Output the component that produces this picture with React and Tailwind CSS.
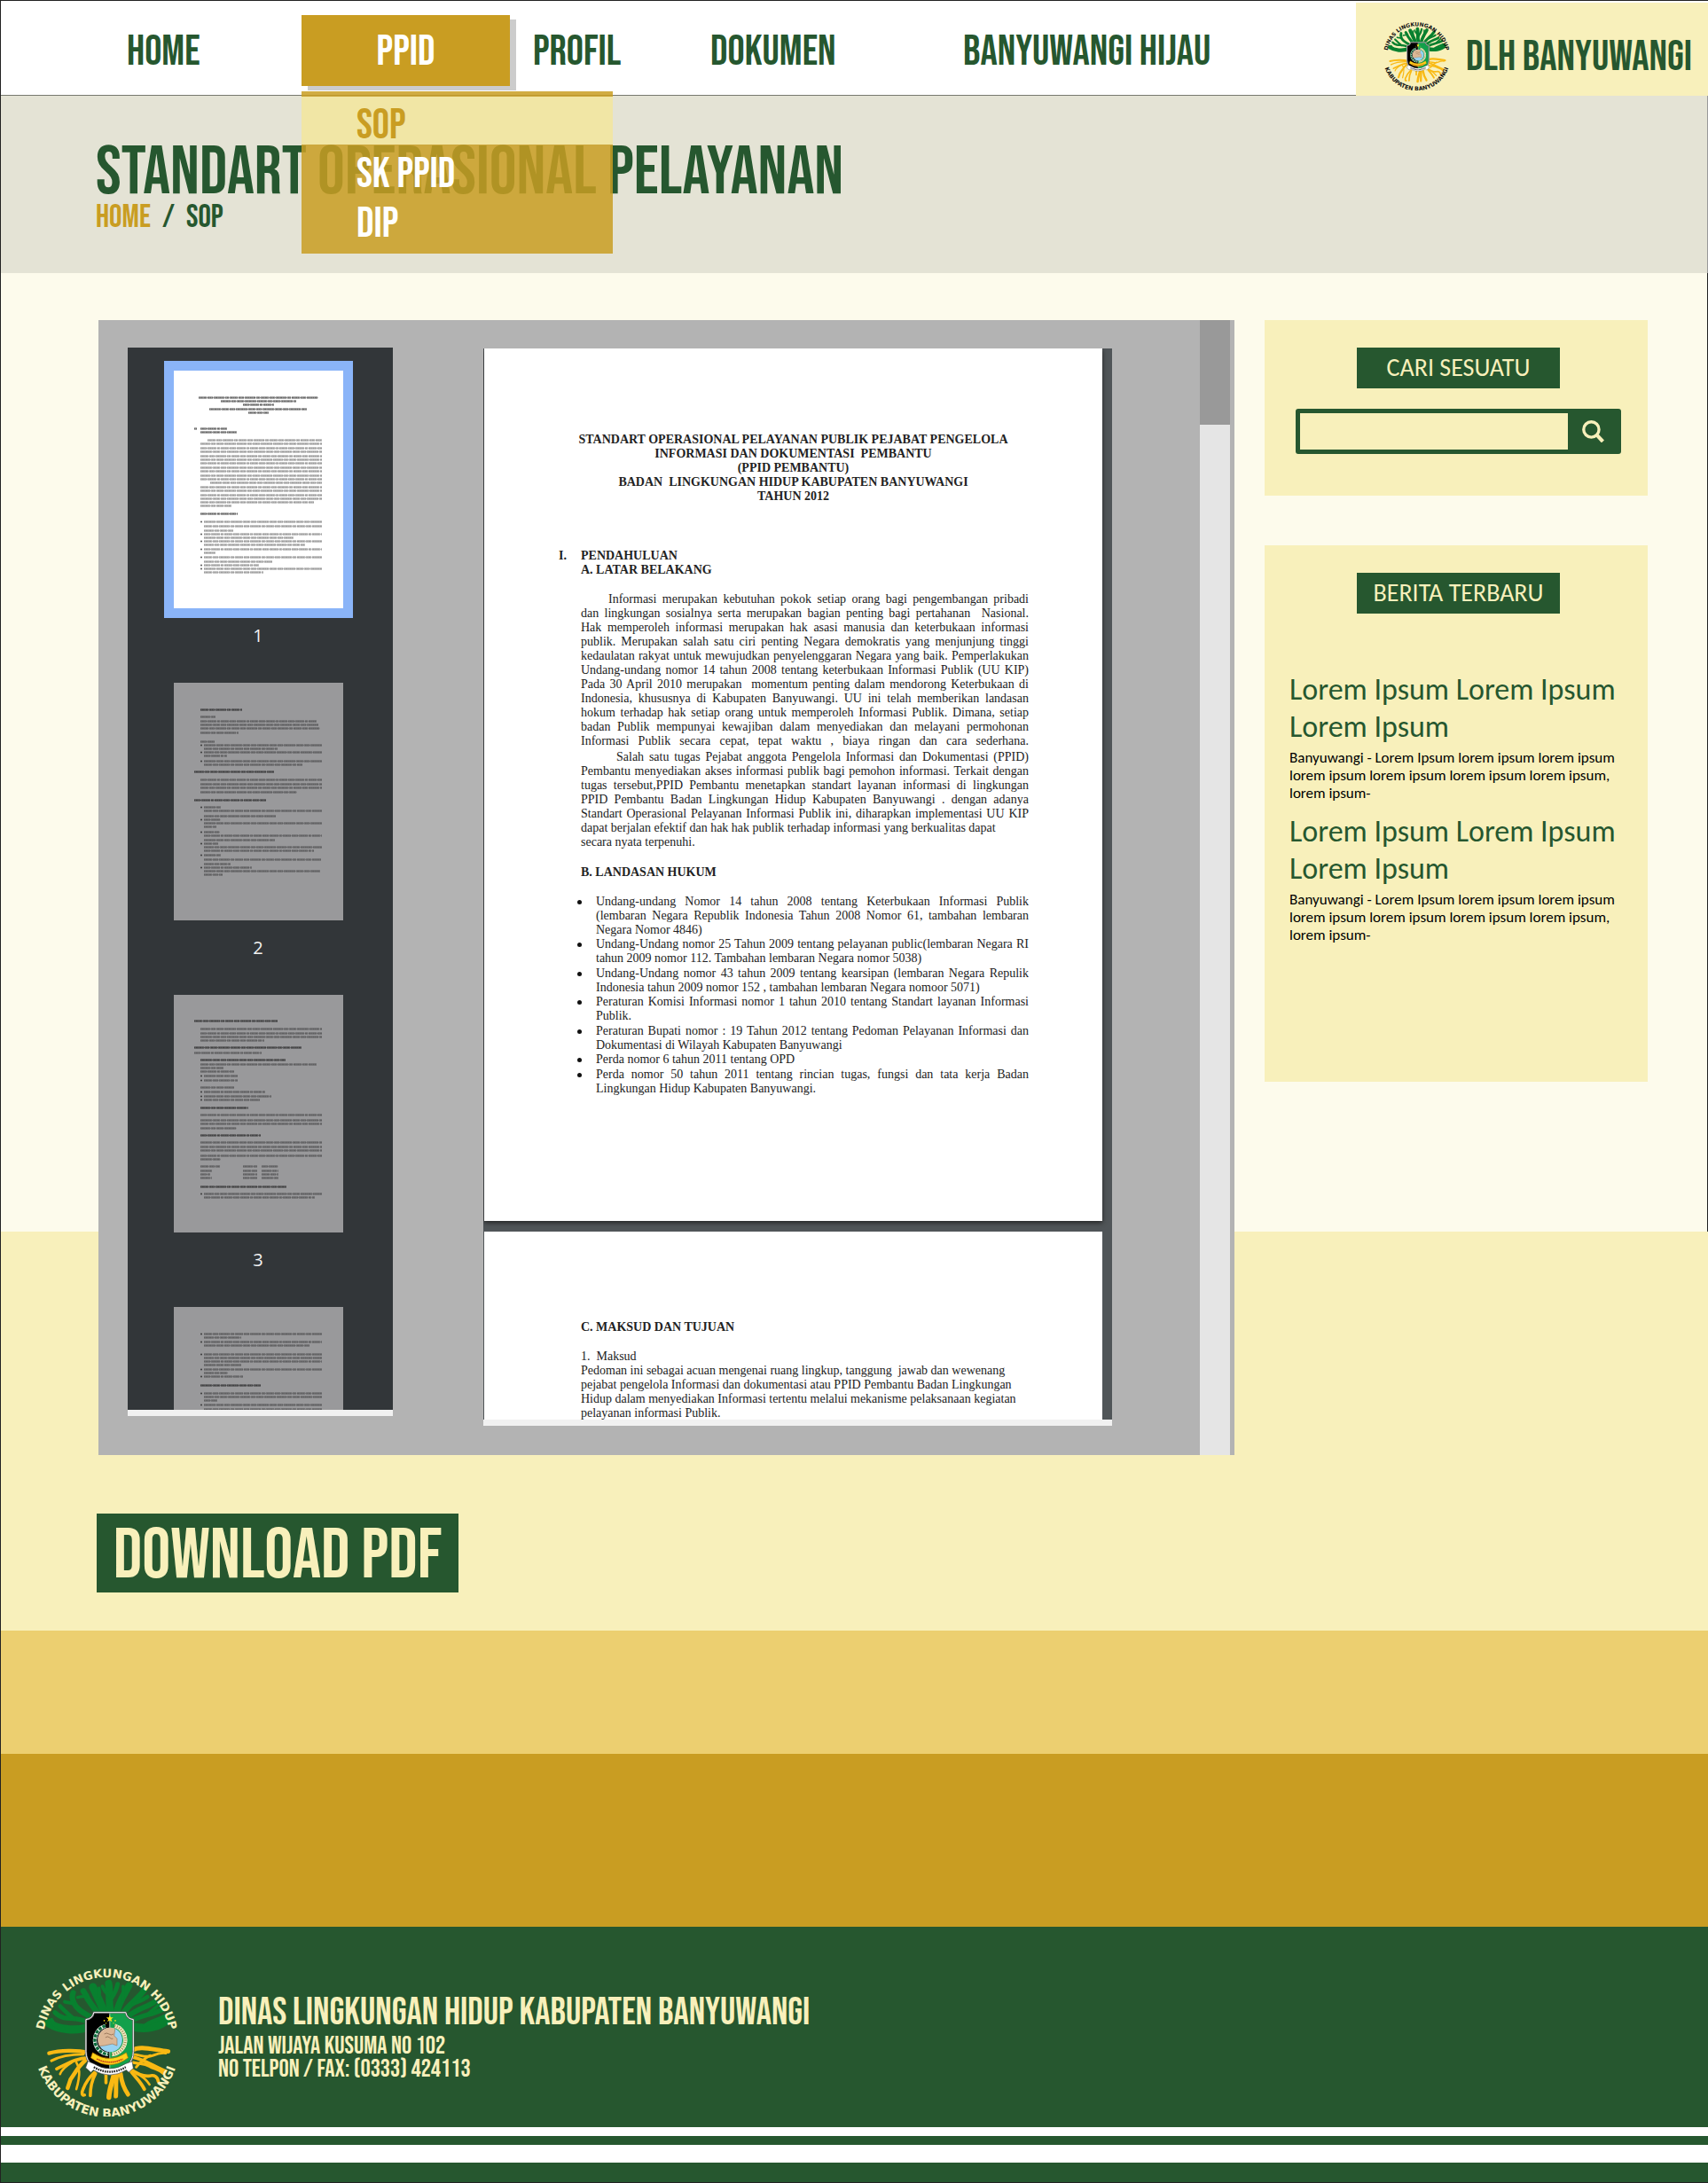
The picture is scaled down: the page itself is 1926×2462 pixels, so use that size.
import React from 'react';

const CANOPY = [
  ['M215 226 C165 244 105 238 70 214', 28],
  ['M120 232 C98 230 86 216 80 204', 14],
  ['M210 212 C180 196 150 200 122 196 C106 192 98 184 92 178', 16],
  ['M158 200 C140 186 126 172 110 156', 14],
  ['M225 200 C190 178 168 168 158 146 C151 132 151 120 155 110', 19],
  ['M160 150 C148 143 136 145 126 141', 12],
  ['M245 190 C230 160 206 142 200 120 L190 104', 20],
  ['M200 124 C188 120 178 124 170 126', 10],
  ['M262 180 C250 140 234 118 223 90', 27],
  ['M240 130 C250 116 246 106 244 94', 10],
  ['M284 180 C276 140 282 106 277 78', 25],
  ['M282 124 C266 108 258 98 256 88', 12],
  ['M286 130 C300 108 306 94 308 80', 15],
  ['M304 180 C312 140 334 112 347 86', 24],
  ['M324 136 C330 112 328 98 327 88', 11],
  ['M326 184 C344 150 380 132 401 99', 20],
  ['M362 148 C384 138 398 134 411 124', 14],
  ['M340 196 C366 168 408 160 433 143', 18],
  ['M356 206 C390 186 430 186 462 167', 17],
  ['M410 186 C426 172 440 160 450 151', 11],
  ['M356 226 C400 238 452 230 478 202', 29],
  ['M400 226 C420 206 446 206 467 192', 14],
];

const ROOTS = [
  ['M205 316 C170 306 108 308 72 318', 13],
  ['M190 322 C150 322 110 328 80 344', 9],
  ['M205 334 C170 334 140 352 98 372', 11],
  ['M150 350 C130 362 116 372 110 390', 8],
  ['M196 344 C170 366 160 390 146 408 L136 438', 14],
  ['M166 350 C176 366 182 386 166 442', 8],
  ['M228 385 C206 406 196 424 190 440 C182 456 186 466 194 462', 11],
  ['M232 388 C220 410 214 430 214 464', 11],
  ['M268 388 L268 420', 11],
  ['M296 385 C294 410 280 434 278 470', 17],
  ['M306 390 C300 420 304 440 302 466', 15],
  ['M318 388 C322 420 330 440 344 460', 15],
  ['M350 372 C380 392 400 400 418 396 C436 392 446 400 448 416', 11],
  ['M350 374 C366 400 384 410 400 442', 12],
  ['M372 388 C396 398 410 414 418 426', 8],
  ['M358 308 C384 292 420 304 482 312', 15],
  ['M362 322 C390 324 404 336 430 326 C448 318 460 316 474 318', 9],
  ['M362 332 C396 340 420 356 472 380', 12],
  ['M362 350 C390 356 400 352 416 362 C436 374 450 372 466 388', 10],
  ['M420 326 C400 336 388 346 372 366', 9],
];

function Logo({ className, ink, id }) {
  return (
    <svg viewBox="10 14 522 522" className={className} role="img" aria-label="Dinas Lingkungan Hidup Kabupaten Banyuwangi">
      <defs>
        <path id={`${id}-top`} d="M53 254 A218 218 0 0 1 487 254" />
        <path id={`${id}-bottom`} d="M21 288 A250 250 0 0 0 521 288" />
        <clipPath id={`${id}-shield`}>
          <path d="M199 202 Q222 200 226 178 H336 Q340 200 362 202 V312 Q362 372 281 380 Q199 372 199 312 Z" />
        </clipPath>
        <clipPath id={`${id}-disc`}>
          <circle cx="282" cy="272" r="42" />
        </clipPath>
      </defs>
      <g fill="none" stroke="#08802f" strokeLinecap="round">
        {CANOPY.map(([d, w]) => (
          <path key={d} d={d} strokeWidth={w} />
        ))}
      </g>
      <path d="M200 196 Q282 150 362 196 V238 H200 Z" fill="#08802f" />
      <g fill="none" stroke="#f9b913" strokeLinecap="round">
        {ROOTS.map(([d, w]) => (
          <path key={d} d={d} strokeWidth={w} />
        ))}
      </g>
      <g clipPath={`url(#${id}-shield)`}>
        <rect x="195" y="170" width="86" height="215" fill="#000" />
        <rect x="281" y="170" width="86" height="215" fill="#12a04b" />
        <path d="M281 170 V385" stroke="#fff" strokeWidth="2" />
      </g>
      <path d="M199 202 Q222 200 226 178 H336 Q340 200 362 202 V312 Q362 372 281 380 Q199 372 199 312 Z" fill="none" stroke="#555" strokeWidth="7" />
      <path d="M199 202 Q222 200 226 178 H336 Q340 200 362 202 V312 Q362 372 281 380 Q199 372 199 312 Z" fill="none" stroke="#fff" strokeWidth="3" />
      <path d="M281 187 l3 8 h9 l-7 6 3 9 -8 -5 -8 5 3 -9 -7 -6 h9 z" fill="#ffe81a" />
      <g fill="#ffe81a">
        <circle cx="262" cy="206" r="2.500" />
        <circle cx="300" cy="206" r="2.500" />
        <circle cx="268" cy="215" r="2" />
        <circle cx="294" cy="215" r="2" />
      </g>
      <path d="M266 224 A50 50 0 0 0 276 322" fill="none" stroke="#e8f0e8" strokeWidth="13" />
      <path d="M266 224 A50 50 0 0 0 276 322" fill="none" stroke="#0a6a3a" strokeWidth="10" strokeDasharray="11 4" />
      <path d="M298 224 A50 50 0 0 1 288 322" fill="none" stroke="#efe9c4" strokeWidth="14" />
      <path d="M298 224 A50 50 0 0 1 288 322" fill="none" stroke="#a09055" strokeWidth="9" strokeDasharray="3 5" />
      <g clipPath={`url(#${id}-disc)`}>
        <rect x="238" y="228" width="90" height="90" fill="#97d3f3" />
        <path d="M236 250 L262 228 L300 228 L296 258 L306 268 L306 292 L290 286 L262 292 L240 294 Z" fill="#dcb795" stroke="#9a7658" strokeWidth="2" />
        <path d="M262 252 q8 -6 16 0 t16 0 M266 264 q8 -6 14 0 t12 4" fill="none" stroke="#7d5b40" strokeWidth="2" />
      </g>
      <path d="M222 316 Q280 356 338 316 L344 334 Q280 382 216 334 Z" fill="#ffd21a" stroke="#c47a00" strokeWidth="2" />
      <path d="M236 338 Q281 360 326 338" fill="none" stroke="#c4361a" strokeWidth="5" strokeDasharray="5 2" />
      <path d="M206 346 L226 354 Q281 388 336 354 L358 346 L362 370 L346 384 L338 376 Q281 410 224 376 L216 384 L198 368 Z" fill="#fff" stroke="#444" strokeWidth="2" />
      <path d="M226 366 Q281 398 336 366" fill="none" stroke="#222" strokeWidth="7" strokeDasharray="5 3" />
      <g fill={ink} className="font-['DejaVu_Sans',sans-serif] font-bold">
        <text textAnchor="middle" className="text-[40px]">
          <textPath href={`#${id}-top`} startOffset="50%">DINAS LINGKUNGAN HIDUP</textPath>
        </text>
        <text textAnchor="middle" className="text-[42px]">
          <textPath href={`#${id}-bottom`} startOffset="50%">KABUPATEN BANYUWANGI</textPath>
        </text>
      </g>
    </svg>
  );
}

/* Miniature page rows: [y, x1, x2, style]; b = bullet, h = heading */
const F = 167;
const PAGE_ROWS = [
  [
    [30, 28, 163, 'h'], [34, 53, 138, 'h'], [38, 78, 113, 'h'], [43, 40, 150, 'h'], [47, 84, 107, 'h'],
    [65, 23, 26, 'h'], [65, 30, 60, 'h'], [69, 30, 71, 'h'],
    [78, 38, F], [82, 30, F], [87, 30, F], [91, 30, F], [96, 30, F], [100, 30, F], [104, 30, F], [109, 30, F],
    [113, 30, F], [118, 30, F], [122, 30, F], [126, 41, F], [131, 30, F], [135, 30, F], [140, 30, F], [144, 30, F],
    [148, 30, 158], [152, 30, 65], [161, 30, 72, 'h'],
    [170, 34, F, 'b'], [175, 34, F], [180, 34, 67], [184, 34, F, 'b'], [188, 34, 135], [192, 34, F, 'b'], [196, 34, 148],
    [201, 34, F, 'b'], [205, 34, 47], [210, 34, F, 'b'], [215, 34, 111], [219, 34, 96, 'b'], [223, 34, F, 'b'], [227, 34, 101],
  ],
  [
    [30, 30, 77, 'h'], [38, 30, 47], [43, 30, 161], [47, 30, 163], [51, 30, 165], [56, 30, 73], [66, 30, 46],
    [70, 34, F, 'b'], [74, 34, 117], [78, 34, F, 'b'], [82, 34, 60], [88, 34, F, 'b'], [92, 34, 145],
    [100, 23, 113, 'h'], [109, 30, F], [114, 30, F], [118, 30, F], [123, 30, 139], [132, 23, 104, 'h'],
    [140, 34, 53, 'b'], [144, 34, F], [150, 34, 115], [154, 34, 53, 'b'], [158, 34, F], [162, 34, 48],
    [168, 34, 52, 'b'], [172, 34, F], [177, 34, 114], [181, 34, 50, 'b'], [185, 34, F], [189, 34, 158],
    [194, 34, 53, 'b'], [199, 34, 166], [204, 34, 64], [208, 34, 88, 'b'], [212, 34, 165], [216, 34, 55],
  ],
  [
    [29, 23, 117, 'h'], [38, 30, F], [43, 30, F], [47, 30, F], [51, 30, 102], [59, 23, 144, 'h'], [65, 23, 99],
    [73, 30, 126, 'h'], [78, 30, 161], [82, 30, 56], [86, 30, 68], [91, 34, 72, 'b'], [96, 34, 72, 'b'],
    [104, 30, 68], [109, 34, 103, 'b'], [114, 34, 110, 'b'], [118, 34, 97, 'b'], [127, 30, 84, 'h'],
    [135, 30, F], [141, 30, F], [145, 30, F], [150, 30, 71], [158, 30, 98, 'h'],
    [166, 30, F], [171, 30, F], [175, 30, F], [181, 30, F], [185, 30, 53],
    [193, 30, 52], [193, 78, 94], [193, 99, 118], [198, 30, 43], [198, 78, 94], [198, 99, 118],
    [202, 30, 41], [202, 78, 94], [202, 99, 118], [206, 30, 43], [206, 78, 94], [206, 99, 118],
    [216, 30, 127, 'h'], [224, 34, F, 'b'], [228, 34, 159],
  ],
  [
    [30, 34, F, 'b'], [34, 34, 76], [39, 34, F, 'b'], [43, 34, 153], [53, 34, F, 'b'], [57, 34, F], [61, 34, F], [65, 34, 76],
    [70, 34, F, 'b'], [74, 34, 61], [78, 34, 78, 'b'], [88, 30, 98, 'h'], [97, 34, F, 'b'], [101, 34, F], [105, 34, 49],
    [110, 34, F, 'b'], [115, 34, F], [119, 34, F], [124, 34, 90],
  ],
];
const DASHES = ['9 1 6 1 12 1 4 1', '11 1 5 1 8 1 13 1', '7 1 10 1 3 1 9 1', '13 1 8 1 6 1'];

function MiniPage({ rows }) {
  return (
    <svg viewBox="0 0 191 268" className="block h-[268px] w-[191px]" aria-hidden="true">
      {rows.map(([y, x1, x2, kind], i) => (
        <g key={i} stroke="#111" fill="none">
          {kind === 'b' && <circle cx="31" cy={y + 0.500} r="1" fill="#111" fillOpacity="0.7" stroke="none" />}
          <path d={`M${x1} ${y + 0.500} H${x2}`} strokeOpacity={kind === 'h' ? 0.3 : 0.2} strokeWidth="3" strokeDasharray={DASHES[i % 4]} />
          <path d={`M${x1} ${y + 0.500} H${x2}`} strokeOpacity={kind === 'h' ? 0.5 : 0.28} strokeWidth="1.600" strokeDasharray="1.200 0.600 2 0.500" />
        </g>
      ))}
    </svg>
  );
}

function Thumbnails() {
  return (
    <nav aria-label="Halaman" className="mt-[31px] ml-[33px] flex h-[1205px] w-[299px] shrink-0 flex-col items-center gap-[22px] overflow-hidden border-b-[7px] border-[#f1f1f1] bg-[#323639] pt-[15px] pr-[5px]">
      {PAGE_ROWS.map((rows, i) => (
        <button key={i} type="button" aria-label={`Halaman ${i + 1}`} className="flex shrink-0 flex-col items-center">
          <span className={i === 0 ? 'bg-[#8ab4f8] p-[11px]' : 'p-[11px]'}>
            <span className={i === 0 ? 'block bg-white' : 'block bg-[#99999b]'}>
              <MiniPage rows={rows} />
            </span>
          </span>
          {i < 3 && (
            <span className="font-['Open_Sans',sans-serif] text-[20px] leading-[40px] text-[#f1f1f1]">{i + 1}</span>
          )}
        </button>
      ))}
    </nav>
  );
}

const PARA_1 = [
  'Informasi merupakan kebutuhan pokok setiap orang bagi pengembangan pribadi',
  'dan lingkungan sosialnya serta merupakan bagian penting bagi pertahanan \u00a0Nasional.',
  'Hak memperoleh informasi merupakan hak asasi manusia dan keterbukaan informasi',
  'publik. Merupakan salah satu ciri penting Negara demokratis yang menjunjung tinggi',
  'kedaulatan rakyat untuk mewujudkan penyelenggaran Negara yang baik. Pemperlakukan',
  'Undang-undang nomor 14 tahun 2008 tentang keterbukaan Informasi Publik (UU KIP)',
  'Pada 30 April 2010 merupakan \u00a0momentum penting dalam mendorong Keterbukaan di',
  'Indonesia, khususnya di Kabupaten Banyuwangi. UU ini telah memberikan landasan',
  'hokum terhadap hak setiap orang untuk memperoleh Informasi Publik. Dimana, setiap',
  'badan Publik mempunyai kewajiban dalam menyediakan dan melayani permohonan',
  'Informasi Publik secara cepat, tepat waktu , biaya ringan dan cara sederhana.',
];
const PARA_2 = [
  'Salah satu tugas Pejabat anggota Pengelola Informasi dan Dokumentasi (PPID)',
  'Pembantu menyediakan akses informasi publik bagi pemohon informasi. Terkait dengan',
  'tugas tersebut,PPID Pembantu menetapkan standart layanan informasi di lingkungan',
  'PPID Pembantu Badan Lingkungan Hidup Kabupaten Banyuwangi . dengan adanya',
  'Standart Operasional Pelayanan Informasi Publik ini, diharapkan implementasi UU KIP',
];
const LAWS = [
  [['Undang-undang Nomor 14 tahun 2008 tentang Keterbukaan Informasi Publik', '(lembaran Negara Republik Indonesia Tahun 2008 Nomor 61, tambahan lembaran'], 'Negara Nomor 4846)'],
  [['Undang-Undang nomor 25 Tahun 2009 tentang pelayanan public(lembaran Negara RI'], 'tahun 2009 nomor 112. Tambahan lembaran Negara nomor 5038)'],
  [['Undang-Undang nomor 43 tahun 2009 tentang kearsipan (lembaran Negara Repulik'], 'Indonesia tahun 2009 nomor 152 , tambahan lembaran Negara nomoor 5071)'],
  [['Peraturan Komisi Informasi nomor 1 tahun 2010 tentang Standart layanan Informasi'], 'Publik.'],
  [['Peraturan Bupati nomor : 19 Tahun 2012 tentang Pedoman Pelayanan Informasi dan'], 'Dokumentasi di Wilayah Kabupaten Banyuwangi'],
  [[], 'Perda nomor 6 tahun 2011 tentang OPD'],
  [['Perda nomor 50 tahun 2011 tentang rincian tugas, fungsi dan tata kerja Badan'], 'Lingkungan Hidup Kabupaten Banyuwangi.'],
];

function Justified({ lines }) {
  return lines.map((line) => (
    <span key={line} className="block whitespace-nowrap [text-align-last:justify]">
      {line}
    </span>
  ));
}

function Document() {
  return (
    <div className="mt-8 mb-[33px] ml-[102px] h-[1215px] w-[709px] shrink-0 overflow-hidden border-b-[7px] border-[#f1f1f1] bg-[#505558] pl-px font-['Liberation_Serif',serif] text-[14px] leading-[16px] text-[#222]">
      <article className="h-[984px] w-[697px] bg-white pt-[95px] pr-[83px] pl-[109px] shadow-[0_2px_5px_#222]">
        <h2 className="-ml-[26px] text-center font-bold whitespace-nowrap">
          STANDART OPERASIONAL PELAYANAN PUBLIK PEJABAT PENGELOLA
          <br />
          INFORMASI DAN DOKUMENTASI &nbsp;PEMBANTU
          <br />
          (PPID PEMBANTU)
          <br />
          BADAN &nbsp;LINGKUNGAN HIDUP KABUPATEN BANYUWANGI
          <br />
          TAHUN 2012
        </h2>
        <h3 className="mt-[51px] -ml-[25px] flex font-bold">
          <span className="w-[25px]">I.</span>
          <span>
            PENDAHULUAN
            <br />
            A. LATAR BELAKANG
          </span>
        </h3>
        <p className="mt-[17px] indent-[31px]">
          <Justified lines={PARA_1.slice(0, 1)} />
        </p>
        <p>
          <Justified lines={PARA_1.slice(1)} />
        </p>
        <p className="mt-[2px] indent-[40px]">
          <Justified lines={PARA_2.slice(0, 1)} />
        </p>
        <p>
          <Justified lines={PARA_2.slice(1)} />
          dapat berjalan efektif dan hak hak publik terhadap informasi yang berkualitas dapat
          <br />
          secara nyata terpenuhi.
        </p>
        <h3 className="mt-[18px] font-bold">B. LANDASAN HUKUM</h3>
        <ul className="mt-[17px] -ml-[4px]">
          {LAWS.map(([lines, last]) => (
            <li key={last} className="flex gap-4 even:mb-px">
              <span className="mt-[6px] size-[5px] shrink-0 rounded-full bg-[#111]" />
              <span className="flex-1">
                <Justified lines={lines} />
                {last}
              </span>
            </li>
          ))}
        </ul>
      </article>
      <article className="mt-3 h-[984px] w-[697px] bg-white pt-[100px] pr-[83px] pl-[109px]">
        <h3 className="font-bold">C. MAKSUD DAN TUJUAN</h3>
        <p className="mt-[17px]">1. &nbsp;Maksud</p>
        <p className="whitespace-nowrap">
          Pedoman ini sebagai acuan mengenai ruang lingkup, tanggung &nbsp;jawab dan wewenang
          <br />
          pejabat pengelola Informasi dan dokumentasi atau PPID Pembantu Badan Lingkungan
          <br />
          Hidup dalam menyediakan Informasi tertentu melalui mekanisme pelaksanaan kegiatan
          <br />
          pelayanan informasi Publik.
        </p>
      </article>
    </div>
  );
}

function Header() {
  const item = 'flex h-full items-center pt-[9px]';
  return (
    <header className="relative z-10 flex h-[107px] border-b border-[#77786f] bg-white text-[48px] leading-[56px] text-[#26572f]">
      <nav className="flex-1">
        <ul className="flex h-full whitespace-nowrap">
          <li className="w-[339px]">
            <a href="#home" className={`${item} pl-[142px]`}>HOME</a>
          </li>
          <li className="relative w-[235px] pt-4">
            <button type="button" aria-expanded="true" className="flex h-20 w-full items-center justify-center bg-[#c99d22] pt-1 text-white shadow-[7px_5px_0_#cccccc]">
              PPID
            </button>
            <ul className="absolute top-[102px] left-0 w-[351px] bg-[#c99d22]/85 pt-[6px] pb-[5px] text-white">
              <li className="h-[54px] bg-[#f1e6a5] pt-[5px] pl-[62px] text-[#c99d22]">
                <a href="#sop">SOP</a>
              </li>
              <li className="mt-[6px] pl-[62px]">
                <a href="#sk-ppid">SK PPID</a>
              </li>
              <li className="pl-[62px]">
                <a href="#dip">DIP</a>
              </li>
            </ul>
          </li>
          <li className="ml-[26px] w-[200px]">
            <a href="#profil" className={item}>PROFIL</a>
          </li>
          <li className="w-[285px]">
            <a href="#dokumen" className={item}>DOKUMEN</a>
          </li>
          <li>
            <a href="#hijau" className={item}>BANYUWANGI HIJAU</a>
          </li>
        </ul>
      </nav>
      <a href="#dlh" className="mt-[2px] -mb-px flex w-[397px] items-center bg-[#f8f0bb] pt-[19px] pl-[29px] whitespace-nowrap">
        <Logo id="brand" ink="#111111" className="mr-4 -mt-[6px] size-[79px]" />
        DLH BANYUWANGI
      </a>
    </header>
  );
}

function PanelTitle({ children }) {
  return (
    <h2 className="mx-auto flex h-[46px] w-[229px] items-center justify-center bg-[#26572f] text-[28px] leading-[32px] text-[#f8f0bb]">
      {children}
    </h2>
  );
}

function Sidebar() {
  return (
    <aside className="w-[432px] shrink-0 font-['Carlito','Calibri','Open_Sans',sans-serif]">
      <section className="bg-[#f8f0bb] pt-[31px] pb-[47px] pl-[5px]">
        <PanelTitle>CARI SESUATU</PanelTitle>
        <form className="mx-auto mt-[23px] flex h-[51px] w-[367px] rounded-[3px] bg-[#26572f] py-[5px] pl-[5px]">
          <input type="search" aria-label="Cari sesuatu" className="min-w-0 flex-1 bg-[#f8f0bb] px-2 text-[20px] outline-none" />
          <button type="button" aria-label="Cari" className="flex w-[60px] items-center pl-4">
            <svg viewBox="0 0 24 24" className="size-[25px]" fill="none" stroke="#f8f0bb">
              <circle cx="10" cy="10" r="8.300" strokeWidth="3.200" />
              <path d="M16 16 L22.500 23" strokeWidth="4" />
            </svg>
          </button>
        </form>
      </section>
      <section className="mt-[56px] h-[605px] bg-[#f8f0bb] pt-[31px]">
        <div className="pl-[5px]">
          <PanelTitle>BERITA TERBARU</PanelTitle>
        </div>
        <div className="mt-[65px] flex flex-col gap-3 pr-[14px] pl-[28px]">
          {[1, 2].map((n) => (
            <article key={n}>
              <h3 className="text-[34px] leading-[42px] text-[#26572f]">Lorem Ipsum Lorem Ipsum Lorem Ipsum</h3>
              <p className="mt-1 text-[17px] leading-[20px] text-black">
                Banyuwangi - Lorem Ipsum lorem ipsum lorem ipsum lorem ipsum lorem ipsum lorem ipsum lorem ipsum, lorem ipsum-
              </p>
            </article>
          ))}
        </div>
      </section>
    </aside>
  );
}

export default function App() {
  return (
    <div className="min-w-[1800px] border-t border-b border-l border-[#222] font-['Bebas_Neue','Oswald','Roboto_Condensed',sans-serif]">
      <Header />
      <section className="h-[200px] border-r border-[#999] bg-[#e4e3d5] pt-[52px] pl-[107px] text-[#26572f]">
        <h1 className="text-[77px] leading-[70px] whitespace-nowrap">STANDART OPERASIONAL PELAYANAN</h1>
        <p className="flex gap-[13px] text-[36px] leading-[32px]">
          <a href="#home" className="text-[#c99d22]">HOME</a>
          <span>/</span>
          <span>SOP</span>
        </p>
      </section>
      <main className="pt-[53px] pr-[68px] pb-[43px] pl-[108px] [background:linear-gradient(#222_0_0)_top_right/1px_1081px_no-repeat,linear-gradient(#fdfbec_1081px,#f8f0bb_1081px)]">
        <div className="flex items-start gap-[34px]">
          <div className="ml-[2px] flex flex-1 bg-[#b3b3b3]">
            <Thumbnails />
            <Document />
            <div className="mr-[5px] ml-auto w-[34px] bg-[#e5e5e5]">
              <div className="h-[118px] bg-[#999999]" />
            </div>
          </div>
          <Sidebar />
        </div>
        <button type="button" className="mt-[66px] flex h-[89px] w-[408px] items-center justify-center bg-[#26572f] pt-[7px] text-[80px] leading-[80px] text-[#f8f0bb]">
          DOWNLOAD PDF
        </button>
      </main>
      <div className="h-[139px] bg-[#eccf70]" />
      <div className="h-[195px] bg-[#c99d22]" />
      <footer>
        <div className="flex h-[226px] bg-[#26572f] pt-[43px] pl-[34px] text-[#f8f0bb]">
          <Logo id="footer" ink="#f8f0bb" className="size-[171px]" />
          <div className="pt-[34px] pl-10">
            <p className="text-[43px] leading-[40px]">DINAS LINGKUNGAN HIDUP KABUPATEN BANYUWANGI</p>
            <p className="mt-[5px] text-[28px] leading-[26px]">
              JALAN WIJAYA KUSUMA NO 102
              <br />
              NO TELPON / FAX: (0333) 424113
            </p>
          </div>
        </div>
        <div className="h-[10px] bg-white" />
        <div className="h-[10px] bg-[#26572f]" />
        <div className="h-[20px] bg-white" />
        <div className="h-[22px] bg-[#26572f]" />
      </footer>
    </div>
  );
}
